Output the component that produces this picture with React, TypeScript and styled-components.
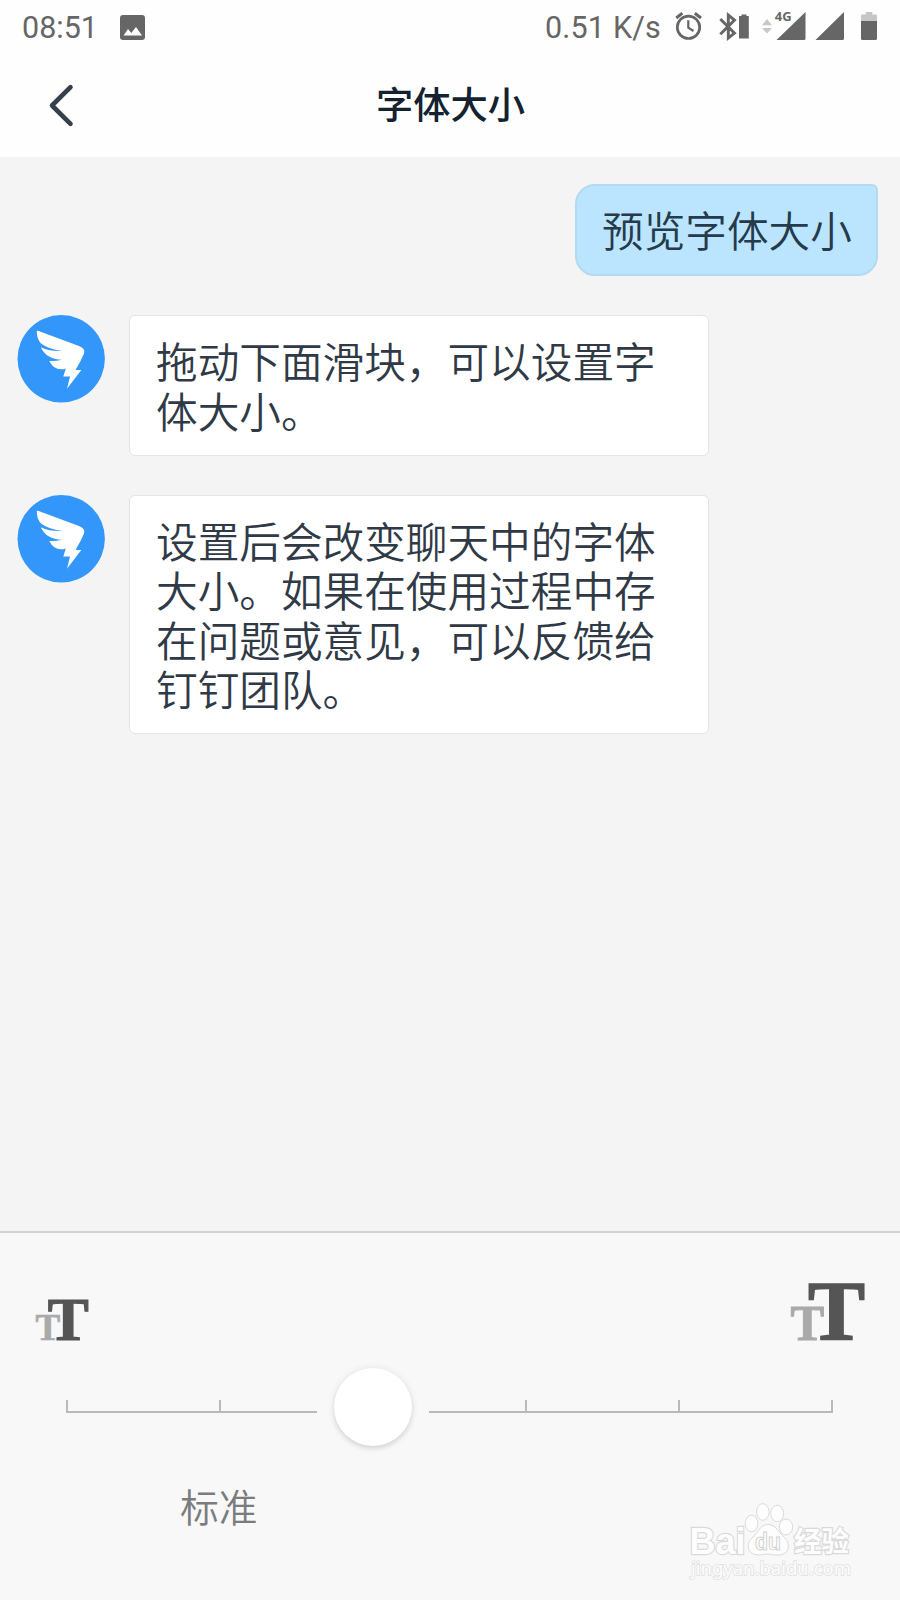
import React from "react";
import styled, { createGlobalStyle } from "styled-components";

const GlobalStyle = createGlobalStyle`
  * { box-sizing: border-box; }
  html, body { margin: 0; padding: 0; background: #fff; }
  body { font-family: "Noto Sans CJK SC", "Noto Sans", sans-serif; }
  svg { display: block; flex: none; overflow: visible; }
`;

const Screen = styled.main`
  position: relative;
  display: flex;
  flex-direction: column;
  width: 900px;
  height: 1600px;
  overflow: hidden;
  background: #f4f4f4;
`;

const StatusBar = styled.div`
  display: flex;
  align-items: center;
  justify-content: space-between;
  height: 54px;
  padding: 0 0 0 22px;
  background: #fefefe;
  color: #666;
  font-family: Roboto, sans-serif;
  font-size: 30.5px;
  line-height: 52px;
`;

const StatusGroup = styled.div<{ $gap: number }>`
  display: flex;
  align-items: center;
  gap: ${(p) => p.$gap}px;
`;

const StatusText = styled.span<{ $spacing?: number }>`
  padding-top: 2px;
  white-space: pre;
  letter-spacing: ${(p) => p.$spacing ?? 0}px;
`;

const Header = styled.header`
  display: grid;
  grid-template-columns: 124px 1fr 124px;
  align-items: center;
  height: 103px;
  background: #fefefe;
`;

const BackButton = styled.button`
  width: 124px;
  height: 103px;
  padding: 0;
  border: 0;
  background: none;
`;

const Title = styled.h1`
  margin: 0 0 5px;
  padding-left: 1px;
  text-align: center;
  color: #14222f;
  font-size: 37.3px;
  font-weight: 500;
  line-height: 50px;
`;

const Chat = styled.section`
  display: flex;
  flex: 1;
  flex-direction: column;
  gap: 39.4px;
  padding: 27px 22px 0 17px;
`;

const MessageRow = styled.div<{ $own?: boolean }>`
  display: flex;
  align-items: flex-start;
  justify-content: ${(p) => (p.$own ? "flex-end" : "flex-start")};
  gap: 24px;
`;

const Bubble = styled.p<{ $own?: boolean }>`
  margin: 0;
  width: ${(p) => (p.$own ? 303 : 580)}px;
  padding: ${(p) => (p.$own ? "19px 0 21px 25px" : "20px 0 20px 26px")};
  border: ${(p) => (p.$own ? "2px solid #b4daef" : "1px solid #e4e4e4")};
  border-radius: ${(p) => (p.$own ? "20px 6px 20px 20px" : "6px")};
  background: ${(p) => (p.$own ? "#bbe5ff" : "#fff")};
  color: ${(p) => (p.$own ? "#253a4a" : "#2f3a46")};
  font-size: 41.65px;
  font-weight: 350;
  line-height: ${(p) => (p.$own ? 48 : 49.2)}px;
  white-space: pre;
`;

const Footer = styled.footer`
  display: flex;
  flex-direction: column;
  height: 369px;
  border-top: 2px solid #d2d2d2;
  background: #f8f8f8;
`;

const SizeIcons = styled.div`
  display: flex;
  align-items: flex-end;
  justify-content: space-between;
  height: 107px;
  padding: 0 32px 0 32px;
`;

const Track = styled.div`
  position: relative;
  display: flex;
  width: 767px;
  height: 13px;
  margin: 60px 0 0 66px;
  border-right: 2px solid #bababa;
  border-bottom: 2px solid #b9b9b9;
`;

const Step = styled.div`
  flex: 1;
  border-left: 2px solid #bababa;
`;

const ThumbGap = styled.div`
  position: absolute;
  left: 251px;
  top: -38px;
  display: flex;
  align-items: center;
  justify-content: center;
  width: 112px;
  height: 90px;
  background: #f8f8f8;
`;

const Thumb = styled.div`
  width: 78px;
  height: 78px;
  border-radius: 50%;
  background: #fff;
  box-shadow: 0 3px 5px rgba(0, 0, 0, 0.1), 0 0 9px rgba(0, 0, 0, 0.07);
`;

const SizeLabel = styled.span`
  margin: 64px 0 0 180px;
  color: #7a7c7e;
  font-size: 38.8px;
  font-weight: 350;
  line-height: 56px;
`;

const Watermark = styled.div`
  position: absolute;
  left: 680px;
  top: 1495px;
`;

function Avatar() {
  return (
    <svg width="88" height="88" viewBox="0 0 88 88">
      <circle cx="44.2" cy="43.8" r="43.7" fill="#3296fa" />
      <path
        fill="#fff"
        d="M21 15.8 L62 31 Q68.8 33.5 67 38.5 Q64 46 58.5 55 H64.3 L50 73.8 L53 61.5 H46.3 L48.8 53.5 Q38 57 32.2 46 Q38 46.5 45 44.8 Q29 44 23.8 32.2 Q33 36.5 45 36 Q31 34 24 28.5 Q19.8 24 19.8 16.7 Q19.8 15.3 21 15.8Z"
      />
    </svg>
  );
}

function PictureIcon() {
  return (
    <svg width="25" height="25" viewBox="0 0 25 25">
      <rect width="25" height="25" rx="3" fill="#666" />
      <path d="M3.5 20.5 L8 14 L11.3 18 L16 12 L22 20.5Z" fill="#fefefe" />
    </svg>
  );
}

function StatusIcons() {
  return (
    <svg width="226" height="54" viewBox="0 0 226 54" fill="#666">
      <g fill="none" stroke="#666">
        <circle cx="14.5" cy="27.3" r="11.2" strokeWidth="2.7" />
        <path d="M14.3 20.2 V27.7 L19.5 31" strokeWidth="2.2" />
        <path d="M2.3 18 L8.3 13.2 M20.8 13.2 L27 18" strokeWidth="3" />
        <path d="M46.3 19 L60.5 33.2 L54.3 38 V15 L60.5 20 L46.3 34.3" strokeWidth="2.9" />
      </g>
      <path d="M65 16 H67.5 V14.5 H72.5 V16 H74.8 V38.5 H65Z" />
      <path d="M88 25.3 L93 19 L98 25.3Z M88 28 H98 L93 33.5Z" fill="#c7c7c7" />
      <path d="M102.5 40 L131.5 12 V38.5 Q131.5 40 130 40Z M141.5 40 L170 12 V38.5 Q170 40 168.5 40Z" />
      <text x="100.8" y="20.5" fontFamily="Open Sans" fontSize="13" fontWeight="700" stroke="#fefefe" strokeWidth="1.5" paintOrder="stroke">4G</text>
      <path d="M187 21 V15.5 Q187 14.5 188 14.5 H191.7 V12 H198.3 V14.5 H202 Q203 14.5 203 15.5 V21Z" fill="#c6c6c6" />
      <path d="M187 21 H203 V38.5 Q203 40 201.5 40 H188.5 Q187 40 187 38.5Z" />
    </svg>
  );
}

function LetterSizeIcon({ large = false }: { large?: boolean }) {
  return (
    <svg width={large ? 80 : 60} height="64" viewBox={large ? "0 0 80 64" : "0 0 60 64"} fontFamily="Liberation Serif" fontWeight="700">
      <text x={large ? 2.6 : 3.5} y="63.5" fontSize={large ? 50.5 : 37} fill="#aaa" stroke="#aaa" strokeWidth={large ? 1 : 0.7}>T</text>
      <text x={large ? 20 : 15.8} y="63.5" fontSize={large ? 85.5 : 61.5} fill="#555" stroke="#555" strokeWidth={large ? 1.6 : 1.2}>T</text>
    </svg>
  );
}

function BaiduMark() {
  return (
    <svg width="190" height="90" viewBox="0 0 190 90" fill="#fdfdfd" stroke="#dadada" strokeWidth="1" fontFamily="Liberation Sans">
      <g fontWeight="700" strokeWidth="2.4" paintOrder="stroke">
        <text x="9.5" y="58.7" fontSize="37.5" textLength="56" lengthAdjust="spacingAndGlyphs">Bai</text>
        <text x="114" y="56.5" fontSize="28" textLength="55" lengthAdjust="spacingAndGlyphs" fontFamily="Noto Sans CJK SC">经验</text>
      </g>
      <ellipse cx="71.5" cy="28.5" rx="6.4" ry="8.3" />
      <ellipse cx="82.8" cy="17" rx="6.3" ry="8.3" />
      <ellipse cx="97.2" cy="18.5" rx="6.5" ry="8.3" />
      <ellipse cx="106" cy="32" rx="6.7" ry="8" />
      <path d="M88 29.5 C96 29.5 98 37 104 42 C110 47 111 59 99 60 C94 60.5 91 59 87 59 C83 59 80 61 75 59.5 C66 57 67 47 72 43 C78 38 80 29.5 88 29.5Z" />
      <text x="75" y="55" fontSize="23" fontWeight="700" textLength="26" lengthAdjust="spacingAndGlyphs" stroke="#d4d4d4" strokeWidth="1.1">du</text>
      <text x="11" y="80" fontSize="18.5" textLength="160" lengthAdjust="spacingAndGlyphs" fontFamily="Noto Sans" strokeWidth="1.6" stroke="#e0e0e0" paintOrder="stroke">jingyan.baidu.com</text>
    </svg>
  );
}

const messages = [
  "拖动下面滑块，可以设置字\n体大小。",
  "设置后会改变聊天中的字体\n大小。如果在使用过程中存\n在问题或意见，可以反馈给\n钉钉团队。",
];

export default function App() {
  return (
    <>
      <GlobalStyle />
      <Screen>
        <StatusBar>
          <StatusGroup $gap={22}>
            <StatusText>08:51</StatusText>
            <PictureIcon />
          </StatusGroup>
          <StatusGroup $gap={13}>
            <StatusText $spacing={0.2}>0.51 K/s</StatusText>
            <StatusIcons />
          </StatusGroup>
        </StatusBar>
        <Header>
          <BackButton aria-label="返回">
            <svg width="124" height="103" viewBox="0 0 124 103" fill="none">
              <path d="M70.5 33.2 L52 51.5 L70.5 69.8" stroke="#35404c" strokeWidth="4.6" strokeLinecap="round" strokeLinejoin="round" />
            </svg>
          </BackButton>
          <Title>字体大小</Title>
        </Header>
        <Chat>
          <MessageRow $own>
            <Bubble $own>预览字体大小</Bubble>
          </MessageRow>
          {messages.map((text) => (
            <MessageRow key={text}>
              <Avatar />
              <Bubble>{text}</Bubble>
            </MessageRow>
          ))}
        </Chat>
        <Footer>
          <SizeIcons>
            <LetterSizeIcon />
            <LetterSizeIcon large />
          </SizeIcons>
          <Track>
            <Step />
            <Step />
            <Step />
            <Step />
            <Step />
            <ThumbGap>
              <Thumb />
            </ThumbGap>
          </Track>
          <SizeLabel>标准</SizeLabel>
        </Footer>
        <Watermark>
          <BaiduMark />
        </Watermark>
      </Screen>
    </>
  );
}
